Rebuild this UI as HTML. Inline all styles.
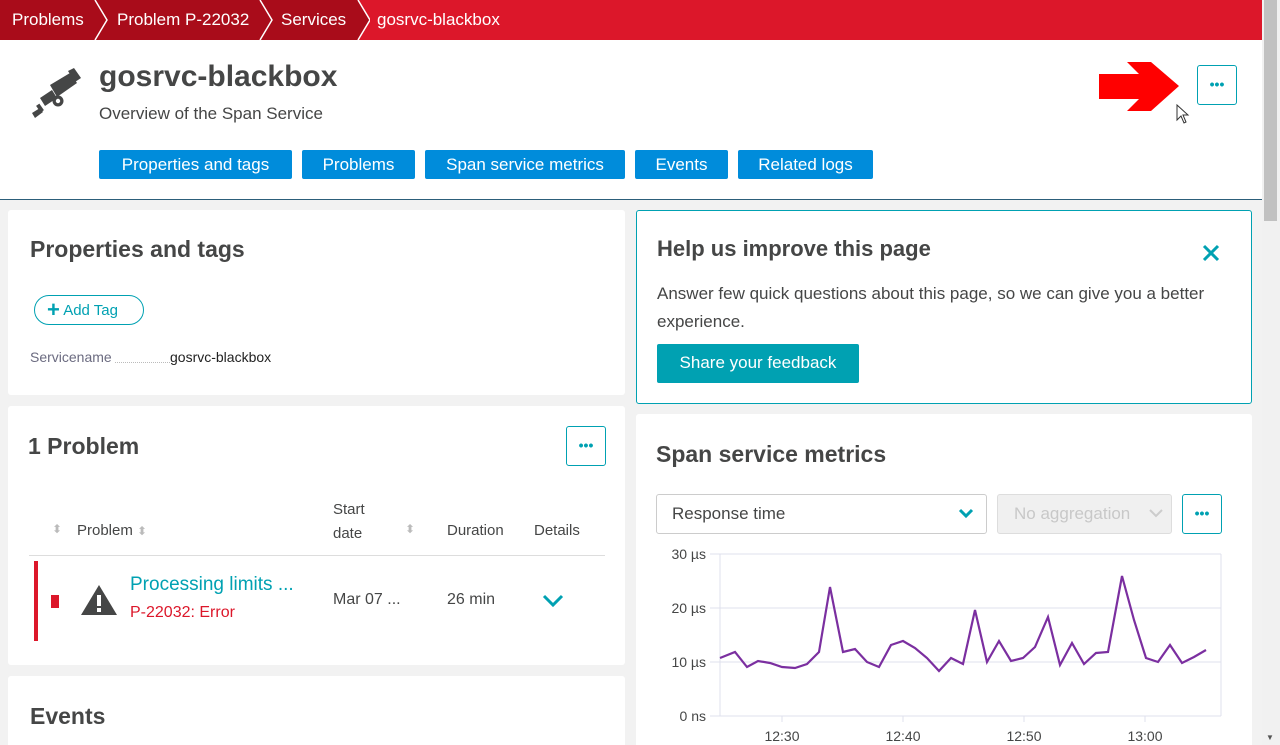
<!DOCTYPE html>
<html><head><meta charset="utf-8"><style>
*{box-sizing:border-box;margin:0;padding:0}
html,body{width:1280px;height:745px;overflow:hidden}
body{background:#f2f2f2;font-family:"Liberation Sans",sans-serif;color:#454646;position:relative}
.a{position:absolute}
.bc{top:0;left:0;width:1262px;height:40px;background:#dc172a}
.bc span{position:absolute;top:0;height:40px;line-height:40px;color:#fff;font-size:17px}
.hdr{top:40px;left:0;width:1262px;height:160px;background:#fff;border-bottom:1px solid #2c5e7a}
.btn{position:absolute;height:29px;background:#008cdb;color:#fff;font-size:17px;line-height:29px;text-align:center;border-radius:2px}
.card{position:absolute;background:#fff;border-radius:3px;overflow:hidden}
.h2{position:absolute;font-size:23px;font-weight:bold;color:#454646}
.dots{position:absolute;border:1px solid #00a1b2;border-radius:3px;background:#fff;color:#00a1b2;text-align:center;font-weight:bold}
.sb{top:0;left:1262px;width:18px;height:745px;background:#f1f1f1}
</style></head><body>
<div class="a bc">
<svg class="a" style="left:0;top:0" width="370" height="40"><polygon points="0,0 95,0 107,20 95,40 0,40" fill="#a90c1a"/><polygon points="95,0 260,0 272,20 260,40 95,40 107,20" fill="#a90c1a"/><polygon points="260,0 358,0 370,20 358,40 260,40 272,20" fill="#a90c1a"/><polyline points="95,0 107,20 95,40" stroke="#fff" stroke-width="1.5" fill="none"/><polyline points="260,0 272,20 260,40" stroke="#fff" stroke-width="1.5" fill="none"/><polyline points="358,0 370,20 358,40" stroke="#fff" stroke-width="1.5" fill="none"/></svg>
<span style="left:12px">Problems</span><span style="left:117px">Problem P-22032</span><span style="left:281px">Services</span><span style="left:377px">gosrvc-blackbox</span>
</div>
<div class="a hdr">
<svg class="a" style="left:28px;top:28px" width="54" height="54" viewBox="0 0 54 54"><g fill="#454646">
<polygon points="22,17 42,5 49,15 29,29"/>
<polygon points="40,3 46,0 53,10 47,14"/>
<polygon points="12,30 24,22 29,30 17,38"/>
<polygon points="4,45 12,40 15,44 7,50"/>
<rect x="10" y="36" width="4" height="8" transform="rotate(-35 12 40)"/>
<circle cx="30" cy="33" r="5.5"/></g><circle cx="30" cy="33" r="2.2" fill="#fff"/></svg>
<div class="a" style="left:99px;top:20px;font-size:30px;font-weight:bold">gosrvc-blackbox</div>
<div class="a" style="left:99px;top:64px;font-size:17px">Overview of the Span Service</div>
<div class="btn" style="left:99px;top:110px;width:193px">Properties and tags</div>
<div class="btn" style="left:302px;top:110px;width:113px">Problems</div>
<div class="btn" style="left:425px;top:110px;width:200px">Span service metrics</div>
<div class="btn" style="left:635px;top:110px;width:93px">Events</div>
<div class="btn" style="left:738px;top:110px;width:135px">Related logs</div>
<svg class="a" style="left:1099px;top:22px" width="82" height="50"><polygon points="0,12 40,12 28,0 52,0 80,24 52,49 28,49 40,37 0,37" fill="#f00"/></svg>
<svg class="a" style="left:1176px;top:64px" width="14" height="22"><path d="M1,1 L1,16 L5,12 L8,19 L10,18 L7,11 L12,11 Z" fill="#fff" stroke="#333"/></svg>
<div class="dots" style="left:1197px;top:25px;width:40px;height:40px;line-height:36px;font-size:14px">•••</div>
</div>
<div class="card" style="left:8px;top:210px;width:617px;height:185px">
<div class="h2" style="left:22px;top:26px">Properties and tags</div>
<div class="a" style="left:26px;top:85px;width:110px;height:30px;border:1px solid #00a1b2;border-radius:15px;color:#00a1b2;font-size:15px;line-height:27px;padding-left:12px"><b style="font-size:22px;vertical-align:-2px">+</b> Add Tag</div>
<div class="a" style="left:22px;top:139px;font-size:14px;color:#6b6b80">Servicename</div>
<div class="a" style="left:107px;top:152px;width:55px;border-top:1px dotted #bbb"></div>
<div class="a" style="left:162px;top:139px;font-size:14px;color:#222">gosrvc-blackbox</div>
</div>
<div class="card" style="left:8px;top:406px;width:617px;height:259px">
<div class="h2" style="left:20px;top:27px">1 Problem</div>
<div class="dots" style="left:558px;top:20px;width:40px;height:40px;line-height:36px;font-size:14px">•••</div>
<div class="a" style="left:44px;top:116px;font-size:12px;color:#bbb">⬍</div>
<div class="a" style="left:69px;top:116px;font-size:15px">Problem <span style="color:#bbb;font-size:12px">⬍</span></div>
<div class="a" style="left:325px;top:92px;font-size:15px;line-height:24px">Start<br>date</div>
<div class="a" style="left:397px;top:116px;font-size:12px;color:#bbb">⬍</div>
<div class="a" style="left:439px;top:116px;font-size:15px">Duration</div>
<div class="a" style="left:526px;top:116px;font-size:15px">Details</div>
<div class="a" style="left:21px;top:149px;width:576px;border-top:1px solid #ddd"></div>
<div class="a" style="left:26px;top:155px;width:4px;height:80px;background:#dc172a"></div>
<div class="a" style="left:43px;top:189px;width:8px;height:13px;background:#dc172a"></div>
<svg class="a" style="left:72px;top:178px" width="38" height="32"><polygon points="19,1 37,31 1,31" fill="#454646"/><rect x="17" y="11" width="4" height="11" fill="#fff"/><rect x="17" y="24" width="4" height="4" fill="#fff"/></svg>
<div class="a" style="left:122px;top:168px;font-size:19px;color:#00a1b2">Processing limits ...</div>
<div class="a" style="left:122px;top:198px;font-size:16px;color:#dc172a">P-22032: Error</div>
<div class="a" style="left:325px;top:185px;font-size:16px">Mar 07 ...</div>
<div class="a" style="left:439px;top:185px;font-size:16px">26 min</div>
<svg class="a" style="left:534px;top:188px" width="22" height="14"><polyline points="2,2 11,11 20,2" fill="none" stroke="#00a1b2" stroke-width="3"/></svg>
</div>
<div class="card" style="left:8px;top:676px;width:617px;height:69px;border-radius:3px 3px 0 0">
<div class="h2" style="left:22px;top:27px">Events</div>
</div>
<div class="card" style="left:636px;top:210px;width:616px;height:194px;border:1px solid #00a1b2">
<div class="h2" style="left:20px;top:25px;font-size:22px">Help us improve this page</div>
<svg class="a" style="left:565px;top:33px" width="18" height="18"><path d="M2,2 L16,16 M16,2 L2,16" stroke="#00a1b2" stroke-width="3"/></svg>
<div class="a" style="left:20px;top:69px;width:580px;font-size:17px;line-height:28px">Answer few quick questions about this page, so we can give you a better experience.</div>
<div class="a" style="left:20px;top:133px;width:202px;height:39px;background:#00a1b2;border-radius:2px;color:#fff;font-size:17px;line-height:38px;text-align:center">Share your feedback</div>
</div>
<div class="card" style="left:636px;top:414px;width:616px;height:331px;border-radius:3px 3px 0 0">
<div class="h2" style="left:20px;top:27px">Span service metrics</div>
<div class="a" style="left:20px;top:80px;width:331px;height:40px;border:1px solid #ccc;border-radius:3px;font-size:17px;line-height:38px;padding-left:15px">Response time</div>
<svg class="a" style="left:322px;top:94px" width="16" height="12"><polyline points="2,2 8,8 14,2" fill="none" stroke="#00a1b2" stroke-width="3"/></svg>
<div class="a" style="left:361px;top:80px;width:175px;height:40px;border:1px solid #ddd;background:#f0f0f0;border-radius:3px;font-size:17px;line-height:38px;padding-left:16px;color:#c8c8c8">No aggregation</div>
<svg class="a" style="left:512px;top:94px" width="16" height="12"><polyline points="2,2 8,8 14,2" fill="none" stroke="#ccc" stroke-width="2"/></svg>
<div class="dots" style="left:546px;top:80px;width:40px;height:40px;line-height:36px;font-size:14px">•••</div>
</div>
<svg class="a" style="left:636px;top:540px" width="616" height="205">
<g font-family="Liberation Sans" font-size="14" fill="#454646" text-anchor="end"><text x="70" y="19">30 µs</text><text x="70" y="73">20 µs</text><text x="70" y="127">10 µs</text><text x="70" y="181">0 ns</text></g>
<g stroke="#dfe0ec"><line x1="74" y1="14" x2="585" y2="14"/><line x1="74" y1="68" x2="585" y2="68"/><line x1="74" y1="122" x2="585" y2="122"/><line x1="74" y1="176" x2="585" y2="176"/><line x1="84" y1="14" x2="84" y2="176"/><line x1="585" y1="14" x2="585" y2="176"/><line x1="146" y1="176" x2="146" y2="182"/><line x1="267" y1="176" x2="267" y2="182"/><line x1="388" y1="176" x2="388" y2="182"/><line x1="509" y1="176" x2="509" y2="182"/></g>
<g font-family="Liberation Sans" font-size="14" fill="#454646" text-anchor="middle"><text x="146" y="201">12:30</text><text x="267" y="201">12:40</text><text x="388" y="201">12:50</text><text x="509" y="201">13:00</text></g>
<polyline fill="none" stroke="#7b2fa0" stroke-width="2.2" transform="translate(-636,-540)" points="720,658 735,652 747,667 758,661 770,663 782,667 795,668 807,664 819,652 830,587 843,652 855,649 867,662 879,667 891,645 903,641 915,648 927,658 939,671 951,658 963,664 975,610 987,662 999,641 1011,661 1023,658 1035,647 1048,617 1060,665 1072,643 1084,664 1096,653 1108,652 1122,576 1134,620 1146,658 1158,662 1170,645 1182,663 1194,657 1206,650"/>
</svg>
<div class="a sb"><div class="a" style="left:2px;top:0;width:13px;height:221px;background:#c1c1c1"></div><div class="a" style="left:4px;top:733px;font-size:8px;color:#555">▼</div></div>
</body></html>
